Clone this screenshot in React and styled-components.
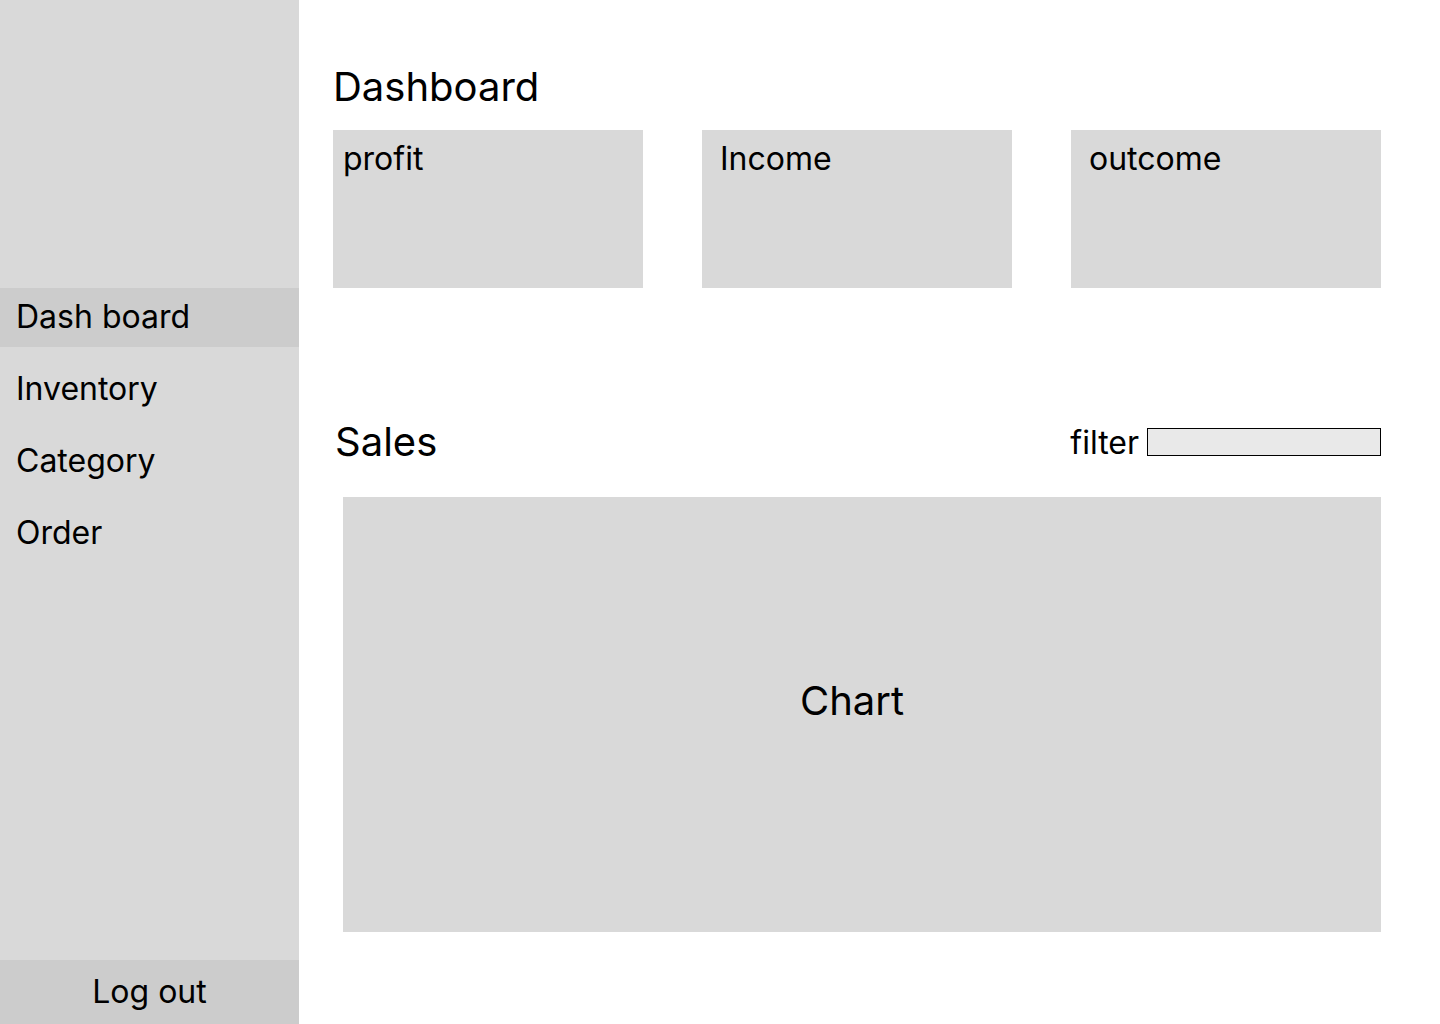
import styled, { createGlobalStyle } from "styled-components";

const Global = createGlobalStyle`
body {
  margin: 0;
  font-family: "Inter", "Liberation Sans", sans-serif;
  color: #000;
  background: #fff;
}
`

const Page = styled.div`
display: flex;
width: 1440px;
height: 1024px;
overflow: hidden;
`

const Sidebar = styled.nav`
width: 299px;
flex-shrink: 0;
background-color: #d9d9d9;
display: flex;
flex-direction: column;
`

const Menu = styled.ul`
list-style: none;
margin: 0;
padding: 288px 0 0;
display: flex;
flex-direction: column;
gap: 13px;
flex: 1;
`

const MenuItem = styled.li`
height: 59px;
display: flex;
align-items: center;
padding: 0 0 2px 16px;
box-sizing: border-box;
font-size: 32px;
background-color: ${(p) => (p.$active ? "#cccccc" : "transparent")};
`

const Logout = styled.div`
height: 64px;
display: flex;
align-items: center;
justify-content: center;
padding-bottom: 2px;
box-sizing: border-box;
font-size: 32px;
background-color: #cccccc;
`

const Main = styled.main`
flex: 1;
padding: 63px 59px 0 34px;
display: flex;
flex-direction: column;
`

const Title = styled.h1`
margin: 0;
font-size: 40px;
font-weight: 400;
line-height: 48px;
padding-left: ${(p) => p.$indent || 0}px;
`

const Cards = styled.div`
margin-top: 19px;
display: grid;
grid-template-columns: repeat(3, 310px);
justify-content: space-between;
`

const Card = styled.div`
height: 158px;
background-color: #d9d9d9;
padding: 9px 0 0 ${(p) => p.$pad}px;
box-sizing: border-box;
font-size: 32px;
line-height: 40px;
`

const SalesHeader = styled.div`
margin-top: 130px;
display: flex;
justify-content: space-between;
align-items: center;
`

const Filter = styled.label`
display: flex;
align-items: center;
gap: 8px;
font-size: 32px;
`

const FilterInput = styled.input`
width: 234px;
height: 28px;
box-sizing: border-box;
border: 1px solid #000;
background-color: #e9e9e9;
margin: 0;
padding: 0 4px;
font-family: inherit;
`

const Chart = styled.div`
margin: 31px 0 0 10px;
height: 435px;
background-color: #d9d9d9;
display: flex;
align-items: center;
justify-content: center;
padding: 0 20px 29px 0;
box-sizing: border-box;
font-size: 40px;
`

const menu = ["Dash board", "Inventory", "Category", "Order"];

function App() {
  return (
    <Page>
      <Global />
      <Sidebar>
        <Menu>
          {menu.map((m, i) => (
            <MenuItem key={m} $active={i === 0}>{m}</MenuItem>
          ))}
        </Menu>
        <Logout>Log out</Logout>
      </Sidebar>
      <Main>
        <Title>Dashboard</Title>
        <Cards>
          <Card $pad={10}>profit</Card>
          <Card $pad={18}>Income</Card>
          <Card $pad={18}>outcome</Card>
        </Cards>
        <SalesHeader>
          <Title $indent={2}>Sales</Title>
          <Filter>
            filter
            <FilterInput type="text" />
          </Filter>
        </SalesHeader>
        <Chart>Chart</Chart>
      </Main>
    </Page>
  );
}

export default App;
